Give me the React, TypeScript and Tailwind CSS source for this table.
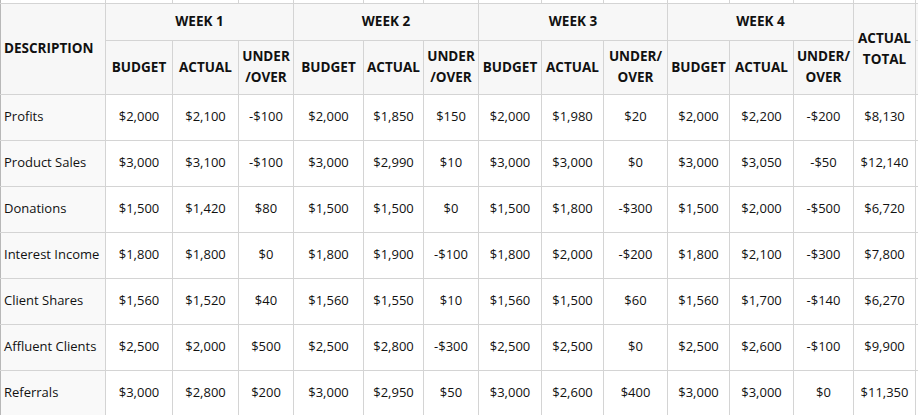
import React from "react";

const weeks = ["WEEK 1", "WEEK 2", "WEEK 3", "WEEK 4"];
const widths = [105, 67, 66, 55, 70, 60, 55, 63, 62, 64, 62, 64, 60, 62, 3];

const rows: [string, string[]][] = [
  ["Profits", ["$2,000", "$2,100", "-$100", "$2,000", "$1,850", "$150", "$2,000", "$1,980", "$20", "$2,000", "$2,200", "-$200", "$8,130"]],
  ["Product Sales", ["$3,000", "$3,100", "-$100", "$3,000", "$2,990", "$10", "$3,000", "$3,000", "$0", "$3,000", "$3,050", "-$50", "$12,140"]],
  ["Donations", ["$1,500", "$1,420", "$80", "$1,500", "$1,500", "$0", "$1,500", "$1,800", "-$300", "$1,500", "$2,000", "-$500", "$6,720"]],
  ["Interest Income", ["$1,800", "$1,800", "$0", "$1,800", "$1,900", "-$100", "$1,800", "$2,000", "-$200", "$1,800", "$2,100", "-$300", "$7,800"]],
  ["Client Shares", ["$1,560", "$1,520", "$40", "$1,560", "$1,550", "$10", "$1,560", "$1,500", "$60", "$1,560", "$1,700", "-$140", "$6,270"]],
  ["Affluent Clients", ["$2,500", "$2,000", "$500", "$2,500", "$2,800", "-$300", "$2,500", "$2,500", "$0", "$2,500", "$2,600", "-$100", "$9,900"]],
  ["Referrals", ["$3,000", "$2,800", "$200", "$3,000", "$2,950", "$50", "$3,000", "$2,600", "$400", "$3,000", "$3,000", "$0", "$11,350"]],
];

const uo = [
  ["UNDER", "/OVER"],
  ["UNDER", "/OVER"],
  ["UNDER/", "OVER"],
  ["UNDER/", "OVER"],
];

const bd = "border border-[#d4d4d4]";
const hd = "font-bold text-[13.5px]";

export default function App() {
  return (
    <div className="w-[918px] h-[415px] overflow-hidden bg-white text-[#111] font-['Open_Sans',sans-serif]">
      <table className="border-collapse table-fixed w-[918px]">
        <colgroup>
          {widths.map((w, i) => (
            <col key={i} style={{ width: w }} />
          ))}
        </colgroup>
        <tbody>
          <tr className="h-[3px]">
            {widths.map((_, i) => (
              <td key={i} className={`${bd} border-t-0 p-0 bg-white ${i === 0 ? "border-l-[#b8b8b8]" : ""}`} />
            ))}
          </tr>
          <tr className="h-[37px] bg-[#f7f7f7]">
            <td rowSpan={2} className={`${bd} border-l-[#b8b8b8] pl-[3px] ${hd} align-middle`}>
              DESCRIPTION
            </td>
            {weeks.map((w) => (
              <td key={w} colSpan={3} className={`${bd} text-center ${hd}`}>
                {w}
              </td>
            ))}
            <td rowSpan={2} className={`${bd} text-center ${hd} leading-[21px]`}>
              ACTUAL
              <br />
              TOTAL
            </td>
            <td className={`${bd} border-r-0`} />
          </tr>
          <tr className="h-[54px] bg-[#f7f7f7]">
            {uo.map((u, i) => (
              <React.Fragment key={i}>
                <td className={`${bd} text-center ${hd}`}>BUDGET</td>
                <td className={`${bd} text-center ${hd}`}>ACTUAL</td>
                <td className={`${bd} text-center ${hd} leading-[21px]`}>
                  {u[0]}
                  <br />
                  {u[1]}
                </td>
              </React.Fragment>
            ))}
            <td className={`${bd} border-r-0`} />
          </tr>
          {rows.map(([name, vals]) => (
            <tr key={name} className="h-[46px]">
              <td className={`${bd} border-l-[#b8b8b8] bg-[#f9f9f9] pl-[3px] text-[13px] whitespace-nowrap`}>{name}</td>
              {vals.map((v, i) => (
                <td key={i} className={`${bd} text-center text-[13px]`}>
                  {v}
                </td>
              ))}
              <td className={`${bd} border-r-0`} />
            </tr>
          ))}
        </tbody>
      </table>
    </div>
  );
}
